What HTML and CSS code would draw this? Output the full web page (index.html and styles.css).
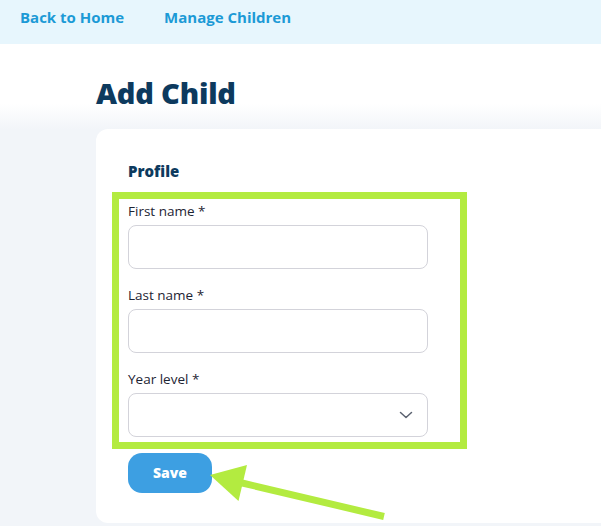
FILE: index.html
```html
<!DOCTYPE html>
<html lang="en">
<head>
<meta charset="utf-8">
<title>Add Child</title>
<link rel="stylesheet" href="styles.css">
</head>
<body>
<div class="page">
  <nav class="topnav">
    <a class="navlink" href="#">Back to Home</a>
    <a class="navlink" href="#">Manage Children</a>
  </nav>
  <main class="main">
    <h1 class="title">Add Child</h1>
    <section class="card">
      <h2 class="section-title">Profile</h2>
      <div class="fields">
        <div class="field">
          <label class="label">First name *</label>
          <div class="input"></div>
        </div>
        <div class="field">
          <label class="label">Last name *</label>
          <div class="input"></div>
        </div>
        <div class="field">
          <label class="label">Year level *</label>
          <div class="input select">
            <svg class="chevron" width="14" height="8" viewBox="0 0 14 8"><polyline points="1.5,1.5 7,6.5 12.5,1.5" fill="none" stroke="#5b6270" stroke-width="1.5" stroke-linecap="round" stroke-linejoin="round"/></svg>
          </div>
        </div>
      </div>
      <button class="save" type="button">Save</button>
    </section>
  </main>
  <svg class="annotation" width="601" height="526" viewBox="0 0 601 526">
    <rect x="115.5" y="195.5" width="348" height="250" fill="none" stroke="#b3eb40" stroke-width="7"/>
    <line x1="238" y1="482" x2="384" y2="516.5" stroke="#b3eb40" stroke-width="7"/>
    <polygon points="210,475 247,465 238.5,501" fill="#b3eb40"/>
  </svg>
</div>
</body>
</html>
```

FILE: styles.css
```css
html, body {
  margin: 0;
  padding: 0;
}
body {
  font-family: "Open Sans", "Noto Sans", sans-serif;
  background: #f2f5f9;
}
.page {
  position: relative;
  width: 601px;
  height: 526px;
  overflow: hidden;
}
.topnav {
  height: 44px;
  background: #e7f6fd;
  display: flex;
  align-items: center;
  gap: 40px;
  padding: 0 0 0 20px;
  box-sizing: border-box;
}
.navlink {
  font-size: 15px;
  font-weight: 700;
  color: #1c9ad6;
  text-decoration: none;
  line-height: 20px;
  margin-top: -10px;
}
.main {
  padding: 31px 0 0 96px;
  background: linear-gradient(to bottom, #ffffff 0, #ffffff 60px, #f2f5f9 85px);
  height: 482px;
  box-sizing: border-box;
}
.title {
  margin: 0 0 18px 0;
  font-size: 29px;
  line-height: 36px;
  font-weight: 800;
  color: #0d3a5e;
  letter-spacing: -0.2px;
}
.card {
  background: #ffffff;
  border-radius: 12px;
  width: 560px;
  padding: 32px 32px 30px 32px;
  box-sizing: border-box;
}
.section-title {
  margin: 0 0 20px 0;
  font-size: 15px;
  line-height: 20px;
  font-weight: 800;
  color: #0d3a5e;
}
.fields {
  display: flex;
  flex-direction: column;
  gap: 16px;
  width: 300px;
}
.field {
  display: flex;
  flex-direction: column;
  gap: 4px;
}
.label {
  font-size: 13.5px;
  line-height: 20px;
  color: #1d2433;
}
.input {
  height: 44px;
  border: 1px solid #d3d3da;
  border-radius: 8px;
  box-sizing: border-box;
  background: #ffffff;
}
.select {
  display: flex;
  align-items: center;
  justify-content: flex-end;
  padding-right: 14px;
}
.chevron {
  display: block;
}
.save {
  margin-top: 16px;
  width: 84px;
  height: 40px;
  border: none;
  border-radius: 14px;
  background: #3d9fe2;
  color: #ffffff;
  font-family: "Open Sans", "Noto Sans", sans-serif;
  font-size: 14px;
  font-weight: 800;
  padding: 0 0 2px 0;
}
.annotation {
  position: absolute;
  top: 0;
  left: 0;
  pointer-events: none;
}
```
